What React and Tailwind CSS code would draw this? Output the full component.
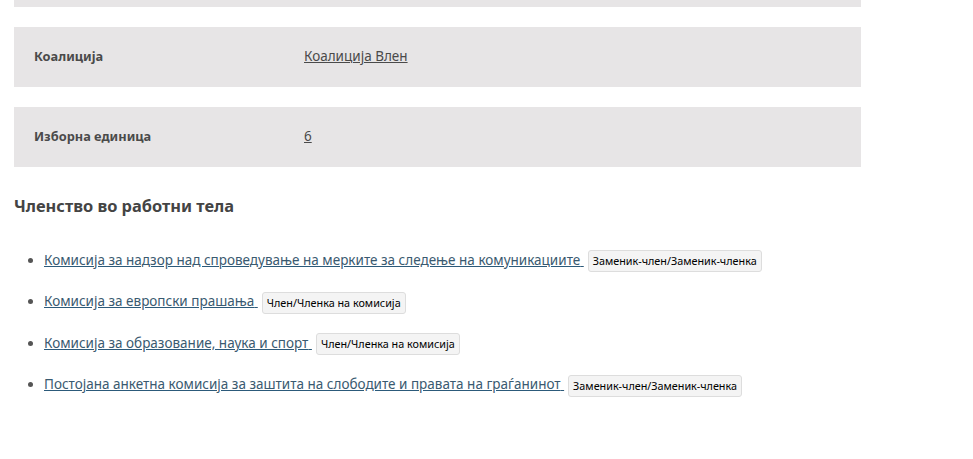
export default function App() {
  const font = { fontFamily: '"Noto Sans", "Open Sans", sans-serif' };
  const items = [
    ["Комисија за надзор над спроведување на мерките за следење на комуникациите", "Заменик-член/Заменик-членка"],
    ["Комисија за европски прашања", "Член/Членка на комисија"],
    ["Комисија за образование, наука и спорт", "Член/Членка на комисија"],
    ["Постојана анкетна комисија за заштита на слободите и правата на граѓанинот", "Заменик-член/Заменик-членка"],
  ];
  return (
    <div className="w-[973px] h-[459px] bg-white overflow-hidden text-[#4a4a4a]" style={font}>
      <div className="pl-[14px] w-[861px]">
        <div className="h-[7px] bg-[#e7e5e6]" />
        <div className="mt-[20px] h-[60px] pb-[2px] bg-[#e7e5e6] flex items-center">
          <div className="w-[290px] pl-[20px] text-[12.8px] font-bold leading-[20px]">Коалиција</div>
          <a href="#" className="text-[13.5px] leading-[20px] underline text-[#4a4a4a]">Коалиција Влен</a>
        </div>
        <div className="mt-[20px] h-[60px] pb-[2px] bg-[#e7e5e6] flex items-center">
          <div className="w-[290px] pl-[20px] text-[12.8px] font-bold leading-[20px]">Изборна единица</div>
          <a href="#" className="text-[13.5px] leading-[20px] underline text-[#4a4a4a]">6</a>
        </div>
        <h3 className="mt-[26px] text-[16.4px] font-bold leading-[26px] text-[#444]">Членство во работни тела</h3>
        <ul className="mt-[30px] pl-[30px] list-disc marker:text-[#555]">
          {items.map(([t, b], i) => (
            <li key={i} className="h-[41.4px] text-[13.5px] leading-[22px]">
              <a href="#" className="text-[#3a5a70] underline decoration-[#2c5a7a]">{t} </a>
              <span className="ml-[4px] inline-block px-[4px] h-[22px] leading-[20px] border border-[#ddd] rounded-[3px] bg-[#f4f4f4] text-black text-[10.8px] align-middle">{b}</span>
            </li>
          ))}
        </ul>
      </div>
    </div>
  );
}
